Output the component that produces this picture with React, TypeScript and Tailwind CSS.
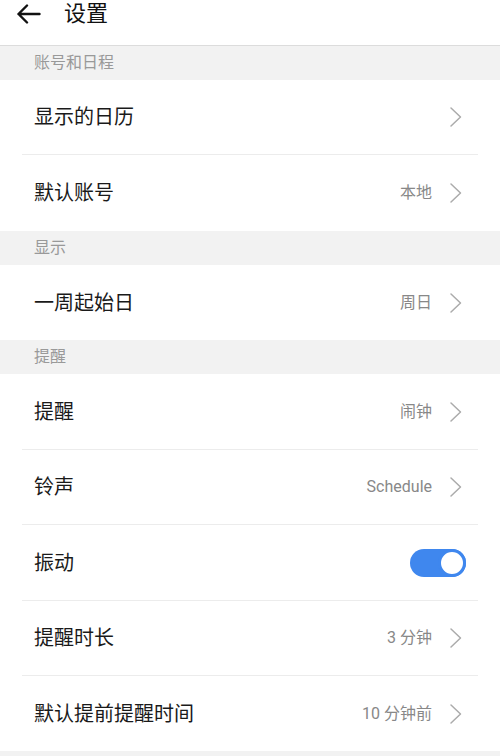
type Row =
  | { kind: 'section'; title: string }
  | { kind: 'item'; label: string; h: string; value?: string; toggle?: boolean; last?: boolean };

const rows: Row[] = [
  { kind: 'section', title: '账号和日程' },
  { kind: 'item', label: '显示的日历', h: 'h-[75px]' },
  { kind: 'item', label: '默认账号', value: '本地', h: 'h-[76px]', last: true },
  { kind: 'section', title: '显示' },
  { kind: 'item', label: '一周起始日', value: '周日', h: 'h-[75px]', last: true },
  { kind: 'section', title: '提醒' },
  { kind: 'item', label: '提醒', value: '闹钟', h: 'h-[76px]' },
  { kind: 'item', label: '铃声', value: 'Schedule', h: 'h-[75px]' },
  { kind: 'item', label: '振动', toggle: true, h: 'h-[76px]' },
  { kind: 'item', label: '提醒时长', value: '3 分钟', h: 'h-[75px]' },
  { kind: 'item', label: '默认提前提醒时间', value: '10 分钟前', h: 'h-[75px]', last: true },
];

function BackArrow() {
  return (
    <svg width="25" height="20" viewBox="0 0 25 20" fill="none" className="text-[#111]">
      <path d="M23.5 10H2.5M11 1.5 2.5 10l8.5 8.5" stroke="currentColor" strokeWidth="2.4" strokeLinecap="round" strokeLinejoin="round" />
    </svg>
  );
}

function Chevron() {
  return (
    <svg width="14" height="22" viewBox="0 0 14 22" fill="none">
      <path d="M2 2l9.5 9L2 20" stroke="#ababab" strokeWidth="1.5" strokeLinecap="round" strokeLinejoin="round" />
    </svg>
  );
}

function Toggle() {
  return (
    <div className="relative h-[28px] w-[56px] rounded-full bg-[#3f87ee]">
      <div className="absolute right-0 top-0 h-[28px] w-[28px] rounded-full border-[3px] border-[#3f87ee] bg-white" />
    </div>
  );
}

export default function App() {
  return (
    <div className="min-h-[756px] bg-[#f2f2f2] font-['Roboto','Noto_Sans_CJK_SC',sans-serif]">
      <header className="flex h-[46px] items-start gap-[23px] border-b border-[#dcdcdc] bg-white pl-[16px] pt-[1px]">
        <div className="pt-[3px]">
          <BackArrow />
        </div>
        <h1 className="text-[22px] leading-[26px] text-[#111]">设置</h1>
      </header>

      {rows.map((row, i) =>
        row.kind === 'section' ? (
          <div key={i} className="flex h-[34px] items-center bg-[#f2f2f2] px-[34px] text-[16px] text-[#999]">
            {row.title}
          </div>
        ) : (
          <div key={i} className="bg-white px-[22px]">
            <div
              className={`flex ${row.h} items-center justify-between pl-[12px] ${
                row.last ? '' : 'border-b border-[#ececec]'
              }`}
            >
              <span className="text-[20px] text-[#1a1a1a]">{row.label}</span>
              {row.toggle ? (
                <div className="mr-[12px]">
                  <Toggle />
                </div>
              ) : (
                <div className="flex items-center gap-[17px] pr-[15px]">
                  {row.value && <span className="text-[16px] text-[#888]">{row.value}</span>}
                  <Chevron />
                </div>
              )}
            </div>
          </div>
        )
      )}
    </div>
  );
}
